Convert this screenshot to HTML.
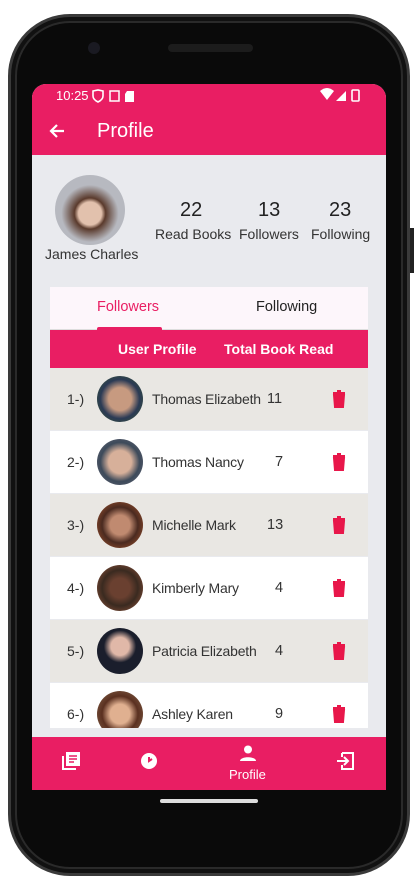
<!DOCTYPE html><html><head><style>
*{margin:0;padding:0;box-sizing:border-box}
body{width:417px;height:881px;background:#fff;position:relative;overflow:hidden;font-family:"Liberation Sans",sans-serif}
.a{position:absolute}
.phone{left:8px;top:14px;width:402px;height:862px;border-radius:62px;background:#0a0a0a;border:3px solid #3a3a3a;box-shadow:inset 0 0 0 4px #111,inset 0 0 0 6px #2a2a2a}
.screen{left:32px;top:84px;width:354px;height:706px;background:#e9eaee;border-radius:14px 14px 0 0;overflow:hidden}
.pink{background:#e91e63}
.t{position:absolute;white-space:nowrap}
.row{position:absolute;left:18px;width:318px;height:62px}
.av{position:absolute;left:47px;top:8px;width:46px;height:46px;border-radius:50%}
.num{left:17px;top:23px;font-size:14px;color:#333}
.nm{left:102px;top:23px;font-size:14px;letter-spacing:-0.2px;color:#333}
.cnt{top:23px;font-size:14.5px;color:#333}
.tr{position:absolute;left:282px;top:22px}
</style></head><body>
<div class="a phone"></div>
<div class="a" style="left:88px;top:42px;width:12px;height:12px;border-radius:50%;background:#1a1a22"></div>
<div class="a" style="left:168px;top:44px;width:85px;height:8px;border-radius:4px;background:#1c1c1c"></div>
<div class="a" style="left:410px;top:228px;width:4px;height:45px;background:#222"></div>
<div class="a" style="left:160px;top:799px;width:98px;height:4px;border-radius:2px;background:#ddd"></div>
<div class="a screen">
 <div class="a pink" style="left:0;top:0;width:354px;height:71px"></div>
 <div class="t" style="left:24px;top:4px;color:#fff;font-size:13px">10:25</div>
 <svg class="a" style="left:58px;top:5px" width="50" height="14"><path d="M3 2l5-1 5 1v5c0 3-3 5-5 6-2-1-5-3-5-6z" fill="none" stroke="#fff" stroke-width="1.6"/><rect x="20" y="2" width="9" height="10" fill="none" stroke="#fff" stroke-width="1.5"/><path d="M37 2h7v11h-9V5z" fill="#fff"/></svg>
 <svg class="a" style="left:288px;top:4px" width="44" height="14"><path d="M0 3q7-6 14 0l-7 9z" fill="#fff"/><path d="M16 13l10-10v10z" fill="#fff"/><rect x="32" y="2" width="7" height="11" rx="1" fill="none" stroke="#fff" stroke-width="1.6"/></svg>
 <svg class="a" style="left:16px;top:38px" width="18" height="18"><path d="M16 9H3M9 3L3 9l6 6" fill="none" stroke="#fff" stroke-width="2.2"/></svg>
 <div class="t" style="left:65px;top:36px;color:#fff;font-size:20px">Profile</div>
 <div class="a" style="left:23px;top:91px;width:70px;height:70px;border-radius:50%;background:radial-gradient(circle at 50% 55%,#e2c1ad 0 22%,#5a3a2c 30%,#b7b9c0 55%)"></div>
 <div class="t" style="left:13px;top:162px;font-size:14px;color:#333">James Charles</div>
 <div class="t" style="left:148px;top:115px;font-size:20px;color:#222">22</div>
 <div class="t" style="left:123px;top:142px;font-size:14px;color:#333">Read Books</div>
 <div class="t" style="left:226px;top:115px;font-size:20px;color:#222">13</div>
 <div class="t" style="left:207px;top:142px;font-size:14px;color:#333">Followers</div>
 <div class="t" style="left:297px;top:115px;font-size:20px;color:#222">23</div>
 <div class="t" style="left:279px;top:142px;font-size:14px;color:#333">Following</div>
 <div class="a" style="left:18px;top:203px;width:318px;height:43px;background:#fdf6fb;border-bottom:1px solid #ddd"></div>
 <div class="t" style="left:65px;top:215px;font-size:14.5px;color:#e91e63">Followers</div>
 <div class="t" style="left:224px;top:215px;font-size:14.5px;color:#222">Following</div>
 <div class="a" style="left:65px;top:243px;width:65px;height:3px;background:#e91e63;border-radius:2px 2px 0 0"></div>
 <div class="a pink" style="left:18px;top:246px;width:318px;height:38px"></div>
 <div class="t" style="left:86px;top:257px;font-size:14px;font-weight:bold;color:#fff">User Profile</div>
 <div class="t" style="left:192px;top:257px;font-size:14px;font-weight:bold;color:#fff">Total Book Read</div>

 <div class="row" style="top:284px;background:#e9e7e3"><div class="t num">1-)</div><div class="av" style="background:radial-gradient(circle,#c79a80 0 35%,#2b3a55 60%,#3a5a2a)"></div><div class="t nm">Thomas Elizabeth</div><div class="t cnt" style="left:217px">11</div><svg class="tr" width="14" height="18"><path d="M1 3h12M5 1h4M2 5h10l-1 12H3z" stroke="#e8174a" stroke-width="2" fill="#e8174a"/></svg></div>
 <div class="row" style="top:347px;background:#fff"><div class="t num">2-)</div><div class="av" style="background:radial-gradient(circle,#d7b09a 0 35%,#3d4a5a 60%,#667)"></div><div class="t nm">Thomas Nancy</div><div class="t cnt" style="left:225px">7</div><svg class="tr" width="14" height="18"><path d="M1 3h12M5 1h4M2 5h10l-1 12H3z" stroke="#e8174a" stroke-width="2" fill="#e8174a"/></svg></div>
 <div class="row" style="top:410px;background:#e9e7e3"><div class="t num">3-)</div><div class="av" style="background:radial-gradient(circle,#c08a70 0 30%,#4a2a20 55%,#b05a30)"></div><div class="t nm">Michelle Mark</div><div class="t cnt" style="left:217px">13</div><svg class="tr" width="14" height="18"><path d="M1 3h12M5 1h4M2 5h10l-1 12H3z" stroke="#e8174a" stroke-width="2" fill="#e8174a"/></svg></div>
 <div class="row" style="top:473px;background:#fff"><div class="t num">4-)</div><div class="av" style="background:radial-gradient(circle,#6a4030 0 30%,#3a2a20 55%,#a05a40)"></div><div class="t nm">Kimberly Mary</div><div class="t cnt" style="left:225px">4</div><svg class="tr" width="14" height="18"><path d="M1 3h12M5 1h4M2 5h10l-1 12H3z" stroke="#e8174a" stroke-width="2" fill="#e8174a"/></svg></div>
 <div class="row" style="top:536px;background:#e9e7e3"><div class="t num">5-)</div><div class="av" style="background:radial-gradient(circle at 50% 40%,#e0b8a8 0 25%,#1a1e2c 45%)"></div><div class="t nm">Patricia Elizabeth</div><div class="t cnt" style="left:225px">4</div><svg class="tr" width="14" height="18"><path d="M1 3h12M5 1h4M2 5h10l-1 12H3z" stroke="#e8174a" stroke-width="2" fill="#e8174a"/></svg></div>
 <div class="row" style="top:599px;height:45px;background:#fff;overflow:hidden"><div class="t num">6-)</div><div class="av" style="background:radial-gradient(circle,#e0b090 0 30%,#5a3020 55%,#8a6a50)"></div><div class="t nm">Ashley Karen</div><div class="t cnt" style="left:225px">9</div><svg class="tr" width="14" height="18"><path d="M1 3h12M5 1h4M2 5h10l-1 12H3z" stroke="#e8174a" stroke-width="2" fill="#e8174a"/></svg></div>

 <div class="a pink" style="left:0;top:653px;width:354px;height:53px"></div>
 <svg class="a" style="left:29px;top:667px" width="20" height="20"><path d="M2 5v13h13" fill="none" stroke="#fff" stroke-width="2"/><rect x="5" y="1" width="14" height="14" fill="#fff"/><path d="M8 5h8M8 8h8M8 11h5" stroke="#e91e63" stroke-width="1.5"/></svg>
 <svg class="a" style="left:108px;top:668px" width="18" height="18"><circle cx="9" cy="9" r="8" fill="#fff"/><path d="M9 5v4l3-2" fill="none" stroke="#e91e63" stroke-width="2"/></svg>
 <svg class="a" style="left:207px;top:661px" width="18" height="16"><circle cx="9" cy="4.5" r="4" fill="#fff"/><path d="M1 16c0-5 16-5 16 0z" fill="#fff"/></svg>
 <div class="t" style="left:197px;top:683px;font-size:13px;color:#fff">Profile</div>
 <svg class="a" style="left:304px;top:668px" width="18" height="18"><path d="M6 1h11v16H6v-4M6 5V1" fill="none" stroke="#fff" stroke-width="2"/><path d="M1 9h10M8 5l4 4-4 4" fill="none" stroke="#fff" stroke-width="2"/></svg>
</div>
</body></html>
